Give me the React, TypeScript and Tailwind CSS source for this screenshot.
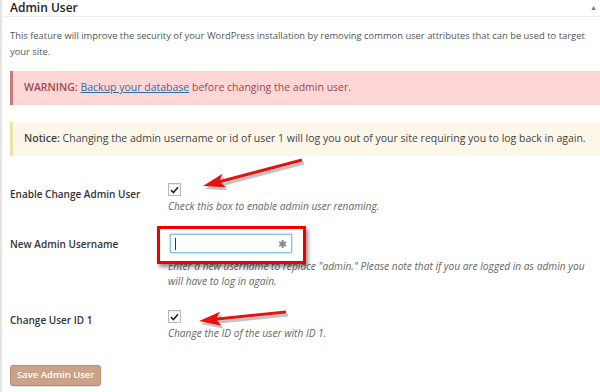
const font = { fontFamily: '"Open Sans", "Liberation Sans", sans-serif' };

const Check = () => (
  <div className="w-[13px] h-[13px] border border-[#b4b9be] bg-white shadow-[inset_0_1px_2px_rgba(0,0,0,0.1)] flex items-center justify-center">
    <svg width="9" height="8" viewBox="0 0 9 8">
      <path d="M1 4.2 L3.4 6.5 L8 1.2" stroke="#222" strokeWidth="1.6" fill="none" />
    </svg>
  </div>
);

const Arrow = ({ x1, y1, x2, y2 }: { x1: number; y1: number; x2: number; y2: number }) => {
  const a = Math.atan2(y2 - y1, x2 - x1);
  const len = 22;
  const w = 7;
  const bx = x2 - Math.cos(a) * len;
  const by = y2 - Math.sin(a) * len;
  const px = -Math.sin(a) * w;
  const py = Math.cos(a) * w;
  const head = `${x2},${y2} ${bx + px},${by + py} ${bx + Math.cos(a) * 5},${by + Math.sin(a) * 5} ${bx - px},${by - py}`;
  return (
    <g>
      <g transform="translate(2,3)" opacity="0.35" fill="#555" stroke="#555">
        <line x1={x1} y1={y1} x2={bx + Math.cos(a) * 6} y2={by + Math.sin(a) * 6} strokeWidth="3" />
        <polygon points={head} stroke="none" />
      </g>
      <line x1={x1} y1={y1} x2={bx + Math.cos(a) * 6} y2={by + Math.sin(a) * 6} stroke="#e8120c" strokeWidth="3" />
      <polygon points={head} fill="#e8120c" />
    </g>
  );
};

export default function App() {
  return (
    <div className="relative w-[600px] h-[392px] bg-white overflow-hidden text-[#444]" style={font}>
      <div className="h-full border-l-2 border-[#e5e5e5]">
        <div className="flex items-center justify-between h-[17px] pl-[8px] pr-[3px] border-b border-[#eee]">
          <h3 className="text-[12px] font-semibold text-[#222] leading-none -mt-[1px]">Admin User</h3>
          <span className="text-[7px] text-[#777]">▲</span>
        </div>
        <div className="pl-[8px]">
          <p className="text-[9.4px] leading-[16px] text-[#555] mt-[11px] pr-[10px]">
            This feature will improve the security of your WordPress installation by removing common user attributes that can be used to target your site.
          </p>
          <div className="mt-[11px] h-[34px] bg-[#ffd6d6] border-l-[3px] border-[#c97b7b] flex items-center pl-[11px] text-[10.5px] text-[#9c4a4a]">
            <span>
              <strong className="font-semibold">WARNING:</strong>{" "}
              <a className="text-[#2e6da4] underline">Backup your database</a> before changing the admin user.
            </span>
          </div>
          <div className="mt-[17px] h-[34px] bg-[#fdf7ea] border-l-[3px] border-[#e9e4a6] flex items-center pl-[11px] text-[10.5px] text-[#444]">
            <span>
              <strong className="font-semibold">Notice:</strong> Changing the admin username or id of user 1 will log you out of your site requiring you to log back in again.
            </span>
          </div>

          <div className="grid grid-cols-[158px_1fr] mt-[27px]">
            <div className="text-[10px] font-semibold text-[#333] pt-[4px]">Enable Change Admin User</div>
            <div className="flex flex-col gap-[3px]">
              <Check />
              <div className="text-[10.2px] italic text-[#666]">Check this box to enable admin user renaming.</div>
            </div>
          </div>

          <div className="grid grid-cols-[158px_1fr] mt-[20px]">
            <div className="text-[10px] font-semibold text-[#333] pt-[3px]">New Admin Username</div>
            <div className="flex flex-col">
              <div className="relative ml-[2px] w-[122px] h-[19px] border border-[#8ebde8] bg-white shadow-[0_0_2px_rgba(30,140,190,0.6)]">
                <span className="absolute left-[4px] top-[3px] w-px h-[12px] bg-[#333]" />
                <span className="absolute right-[4px] top-[1px] text-[11px] text-[#888] leading-[16px]">✱</span>
              </div>
              <div className="text-[10.2px] italic text-[#666] leading-[15px] mt-[6px] pr-[6px]">
                Enter a new username to replace "admin." Please note that if you are logged in as admin you will have to log in again.
              </div>
            </div>
          </div>

          <div className="grid grid-cols-[158px_1fr] mt-[21px]">
            <div className="text-[10px] font-semibold text-[#333] pt-[3px]">Change User ID 1</div>
            <div className="flex flex-col gap-[3px]">
              <Check />
              <div className="text-[10.2px] italic text-[#666]">Change the ID of the user with ID 1.</div>
            </div>
          </div>

          <button className="mt-[23px] h-[21px] px-[6px] rounded-[3px] bg-[#c9a287] border border-[#b58e73] text-white text-[9.5px] font-semibold shadow-[0_1px_0_rgba(0,0,0,0.1)]">
            Save Admin User
          </button>
        </div>
      </div>

      <div className="absolute left-[157px] top-[226px] w-[149px] h-[38px] border-[3px] border-[#ee0000] shadow-[2px_3px_4px_rgba(0,0,0,0.45)]" />
      <svg className="absolute left-0 top-0" width="600" height="392">
        <Arrow x1={302} y1={160} x2={203} y2={186} />
        <Arrow x1={286} y1={312} x2={199} y2={321} />
      </svg>
    </div>
  );
}
